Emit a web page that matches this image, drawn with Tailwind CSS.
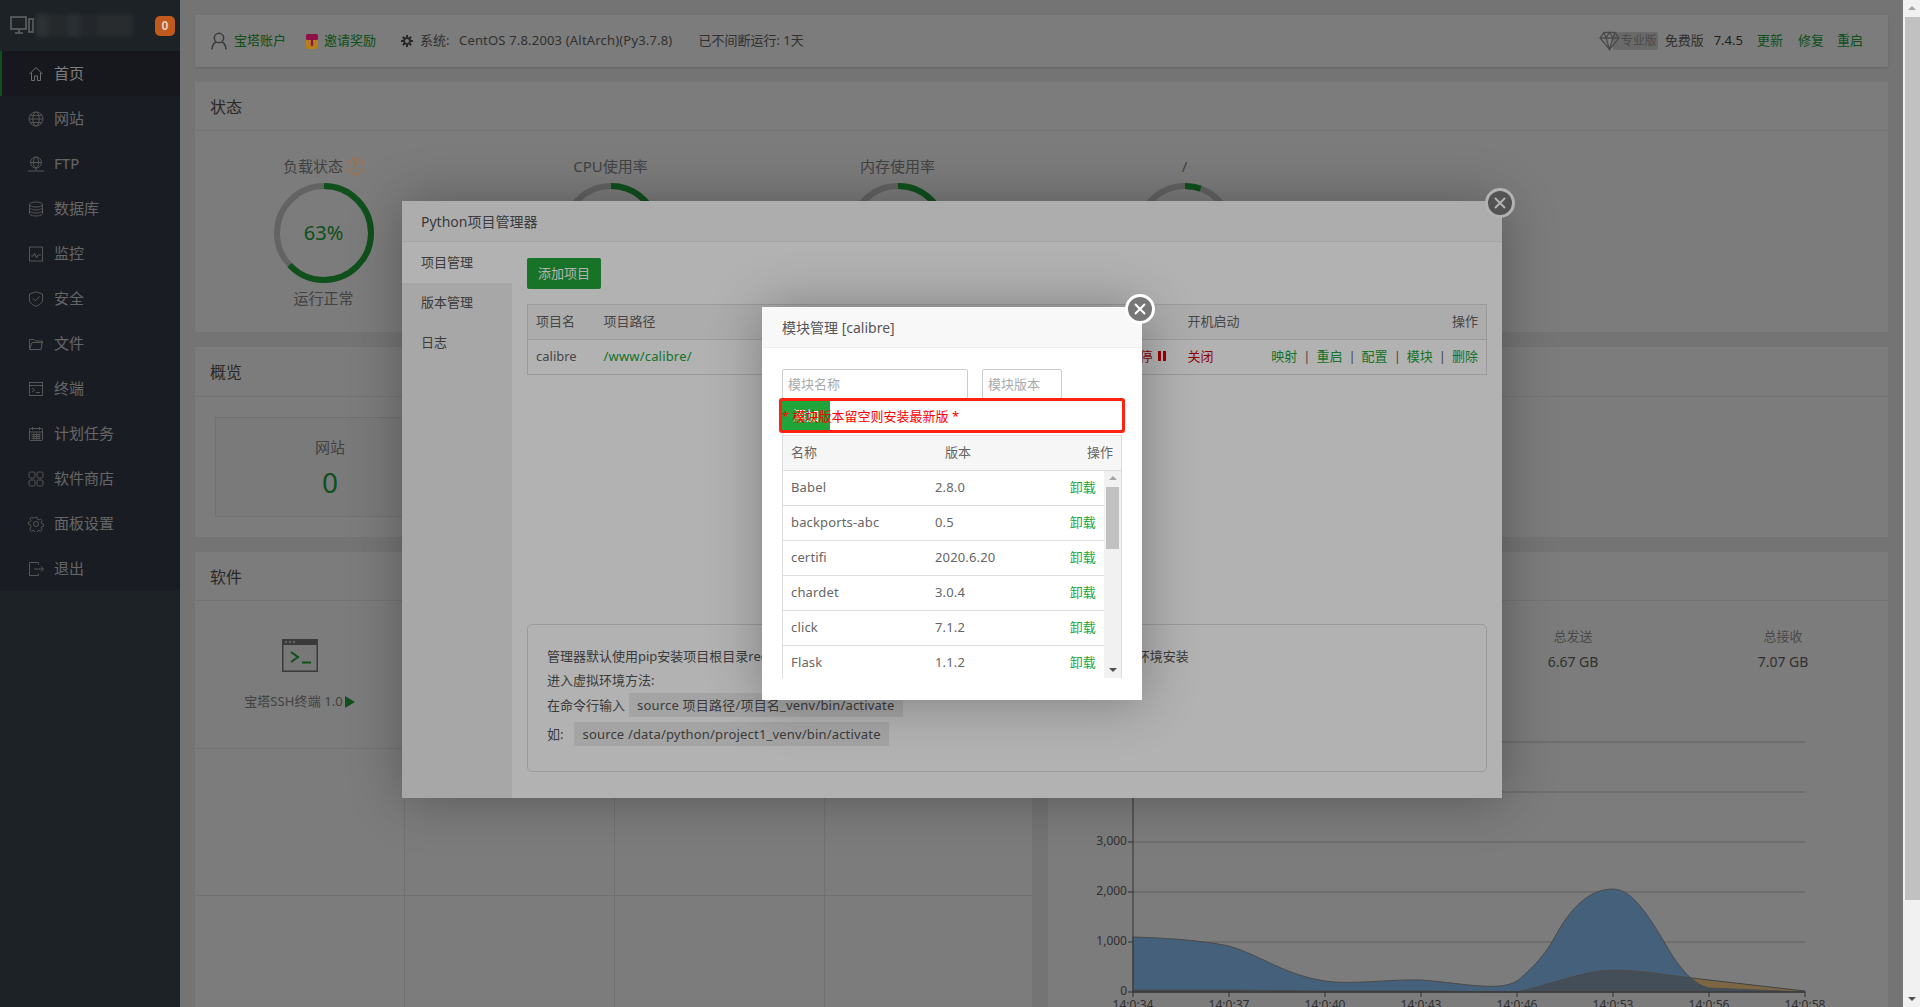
<!DOCTYPE html>
<html lang="zh-CN">
<head>
    <meta charset="UTF-8">
    <title>宝塔Linux面板</title>
    <script src="https://cdn.jsdelivr.net/npm/@tailwindcss/browser@4"></script>
</head>
<body class="bg-[#f0f0f0] overflow-hidden font-['Noto_Sans','Noto_Sans_CJK_SC',sans-serif] text-[13px] text-[#666]">
<div class="flex w-[1920px] h-[1007px] overflow-hidden">

    <!-- page under the two dialogs -->
    <div class="relative flex w-[1903px] h-[1007px] overflow-hidden">

        <!-- sidebar -->
        <aside class="w-[180px] shrink-0 bg-[#3c474f] text-[15px] text-[#d0d0d0]">
            <div class="flex items-center h-[51px] pl-[10px]">
                <svg class="w-[24px] h-[20px] shrink-0" viewBox="0 0 24 20" fill="none" stroke="#c8c8c8" stroke-width="1.6"><rect x="1" y="1" width="15" height="12"/><path d="M5 17h8M9 13v4"/><rect x="19" y="3" width="4" height="13"/></svg>
                <div class="flex h-[23px] w-[97px] ml-[2px] blur-[2px]">
                    <span class="w-[12px] bg-[#5d676d]"></span><span class="w-[20px] bg-[#4d565c]"></span><span class="w-[12px] bg-[#58626a]"></span><span class="w-[18px] bg-[#49525a]"></span><span class="w-[35px] bg-[#535c62]"></span>
                </div>
                <span class="relative z-[14] flex items-center justify-center w-[20px] h-[20px] ml-[22px] rounded-[5px] bg-[#c2591f] text-[#e0cdbd] text-[12px] font-bold">0</span>
            </div>
            <nav class="bg-[#363c47]">
                <a class="flex items-center h-[45px] pl-[26px] bg-[#2f333f] border-l-[2px] border-[#20a53a] text-white">
                    <svg class="w-[16px] h-[16px] mr-[10px] shrink-0" viewBox="0 0 16 16" fill="none" stroke="#e0e0e0"><path d="M1.5 8 8 1.5 14.5 8M3.5 6.5V14.5H6.5V10H9.5V14.5H12.5V6.5"/></svg>首页
                </a>
                <a class="flex items-center h-[45px] pl-[28px]">
                    <svg class="w-[16px] h-[16px] mr-[10px] shrink-0" viewBox="0 0 16 16" fill="none" stroke="#b0b0b0"><circle cx="8" cy="8" r="7"/><ellipse cx="8" cy="8" rx="3.2" ry="7"/><path d="M1 8h14M2 4.5h12M2 11.5h12"/></svg>网站
                </a>
                <a class="flex items-center h-[45px] pl-[28px]">
                    <svg class="w-[16px] h-[16px] mr-[10px] shrink-0" viewBox="0 0 16 16" fill="none" stroke="#b0b0b0"><circle cx="8" cy="6.5" r="5.5"/><ellipse cx="8" cy="6.5" rx="2.5" ry="5.5"/><path d="M2.5 6.5h11M8 12v2M0 15h16"/></svg>FTP
                </a>
                <a class="flex items-center h-[45px] pl-[28px]">
                    <svg class="w-[16px] h-[16px] mr-[10px] shrink-0" viewBox="0 0 16 16" fill="none" stroke="#b0b0b0"><ellipse cx="8" cy="3.5" rx="6.5" ry="2.5"/><path d="M1.5 3.5v9c0 1.4 2.9 2.5 6.5 2.5s6.500-1.100 6.500-2.500v-9M1.500 6.500c0 1.400 2.900 2.500 6.500 2.500s6.500-1.100 6.500-2.500M1.500 9.500c0 1.400 2.900 2.500 6.500 2.500s6.500-1.100 6.500-2.500"/></svg>数据库
                </a>
                <a class="flex items-center h-[45px] pl-[28px]">
                    <svg class="w-[16px] h-[16px] mr-[10px] shrink-0" viewBox="0 0 16 16" fill="none" stroke="#b0b0b0"><rect x="1.500" y="1" width="13" height="14"/><path d="M3 10h2.500l1-3 2 5 1.500-3H13"/></svg>监控
                </a>
                <a class="flex items-center h-[45px] pl-[28px]">
                    <svg class="w-[16px] h-[16px] mr-[10px] shrink-0" viewBox="0 0 16 16" fill="none" stroke="#b0b0b0"><path d="M8 .8 14.500 3v6c0 3-3 5-6.500 6.300C4.500 14 1.500 12 1.500 9V3z"/><path d="m5 7.500 2.300 2.300L11.500 5.500"/></svg>安全
                </a>
                <a class="flex items-center h-[45px] pl-[28px]">
                    <svg class="w-[16px] h-[16px] mr-[10px] shrink-0" viewBox="0 0 16 16" fill="none" stroke="#b0b0b0"><path d="M1.500 13.500v-10h4.500l1.500 1.500h7l-1.500 8.500z"/><path d="M14.500 6.500H4l-2.500 7"/></svg>文件
                </a>
                <a class="flex items-center h-[45px] pl-[28px]">
                    <svg class="w-[16px] h-[16px] mr-[10px] shrink-0" viewBox="0 0 16 16" fill="none" stroke="#b0b0b0"><rect x="1.500" y="1.500" width="13" height="13"/><path d="M1.500 4.500h13M4 7l2.500 2L4 11M8 11.500h4"/></svg>终端
                </a>
                <a class="flex items-center h-[45px] pl-[28px]">
                    <svg class="w-[16px] h-[16px] mr-[10px] shrink-0" viewBox="0 0 16 16" fill="none" stroke="#b0b0b0"><rect x="1.500" y="2.500" width="13" height="12" rx="1"/><path d="M1.500 6h13M4.500 1v3M11.500 1v3M3.500 8.500h9M3.500 10.500h9M3.500 12.500h9M6 7.500v6M8.500 7.500v6M11 7.500v6"/></svg>计划任务
                </a>
                <a class="flex items-center h-[45px] pl-[28px]">
                    <svg class="w-[16px] h-[16px] mr-[10px] shrink-0" viewBox="0 0 16 16" fill="none" stroke="#b0b0b0"><rect x="1" y="1" width="6" height="6" rx="1.500"/><rect x="9" y="1" width="6" height="6" rx="1.500"/><rect x="1" y="9" width="6" height="6" rx="1.500"/><rect x="9" y="9" width="6" height="6" rx="1.500"/></svg>软件商店
                </a>
                <a class="flex items-center h-[45px] pl-[28px]">
                    <svg class="w-[16px] h-[16px] mr-[10px] shrink-0" viewBox="0 0 16 16" fill="none" stroke="#b0b0b0"><circle cx="8" cy="8" r="2.500"/><path d="M6.800 1h2.400l.4 2 1.500.7 1.800-1 1.600 1.700-1.100 1.700.6 1.500 2 .5v2.400l-2 .4-.6 1.500 1.100 1.700-1.600 1.700-1.800-1-1.500.6-.4 2H6.800l-.4-2-1.500-.6-1.800 1-1.600-1.700L2.600 10.400 2 8.900 0 8.400V6l2-.5.600-1.500-1.100-1.700L3.100 .7l1.800 1 1.500-.7z" transform="translate(.5 .5) scale(.94)"/></svg>面板设置
                </a>
                <a class="flex items-center h-[45px] pl-[28px]">
                    <svg class="w-[16px] h-[16px] mr-[10px] shrink-0" viewBox="0 0 16 16" fill="none" stroke="#b0b0b0"><path d="M10.500 3.500v-2h-9v13h9v-2M6 8h9.500M13 5.500 15.500 8 13 10.500"/></svg>退出
                </a>
            </nav>
        </aside>

        <!-- main column -->
        <main class="w-[1723px] pt-[15px] px-[15px]">
            <div class="flex items-center h-[52px] px-[16px] bg-white shadow-sm">
                <svg class="w-[16px] h-[18px] mr-[7px]" viewBox="0 0 16 18" fill="none" stroke="#777" stroke-width="1.500"><circle cx="8" cy="6" r="4.700"/><path d="M1 17.500c0-4.500 2.500-7 4-7.500M15 17.500c0-4.500-2.500-7-4-7.500"/></svg>
                <a class="text-[#20a53a] w-[52px]">宝塔账户</a>
                <svg class="relative z-[14] w-[12px] h-[15px] ml-[20px] mr-[6px]" viewBox="0 0 12 15"><rect y="2" width="12" height="13" rx="1.500" fill="#b87f1c"/><rect width="12" height="6" rx="1.500" fill="#8e1048"/><path d="M5 6h2l.3 5-1.300 1.500L4.700 11z" fill="#8e1048"/></svg>
                <a class="text-[#20a53a] w-[52px]">邀请奖励</a>
                <svg class="w-[12px] h-[12px] ml-[25px] mr-[7px]" viewBox="0 0 12 12" fill="none" stroke="#555" stroke-width="2"><circle cx="6" cy="6" r="3"/><path d="M6 0v2M6 10v2M0 6h2M10 6h2M1.800 1.800l1.400 1.400M8.800 8.800l1.400 1.400M1.800 10.200l1.400-1.400M8.800 3.200l1.400-1.400"/></svg>
                <span class="w-[39px]">系统:</span>
                <span class="tracking-[0.18px]">CentOS 7.8.2003 (AltArch)(Py3.7.8)</span>
                <span class="ml-[26px]">已不间断运行: 1天</span>
                <div class="flex items-center ml-auto mr-[9px]">
                    <svg class="relative z-[1] w-[21px] h-[20px]" viewBox="0 0 21 20" fill="none" stroke="#999" stroke-width="1.300"><path d="M5 1.500h11l4 5.500-9.500 11.500L1 7zM1 7h19M7 7l3.500 11.500L14 7M5 1.500 7 7l3.500-5.500L14 7l2-5.500"/></svg>
                    <span class="flex items-center h-[18px] -ml-[7px] pl-[8px] pr-[1px] rounded-[2px] bg-[#d8d8d8] text-[#999] text-[12px]">专业版</span>
                    <span class="ml-[7px]">免费版</span>
                    <span class="ml-[10px] text-[#444]">7.4.5</span>
                    <a class="ml-[14px] text-[#20a53a]">更新</a>
                    <a class="ml-[15px] text-[#20a53a]">修复</a>
                    <a class="ml-[13px] text-[#20a53a]">重启</a>
                </div>
            </div>

            <!-- status -->
            <section class="h-[250px] mt-[15px] bg-white">
                <h3 class="flex items-center h-[49px] pt-[2px] px-[15px] border-b border-[#eee] text-[16px] font-normal text-[#555]">状态</h3>
                <div class="flex -ml-[15px] pt-[20px] text-center">
                    <div class="w-[287px] shrink-0">
                        <div class="flex items-center justify-center h-[30px] text-[15px] text-[#888]">负载状态<span class="relative z-[14] flex items-center justify-center w-[17px] h-[17px] ml-[4px] rounded-full border-[1.5px] border-[#b8692a] text-[#b8692a] text-[13px]">?</span></div>
                        <div class="relative w-[100px] h-[100px] mx-auto mt-[2px]">
                            <svg class="w-[100px] h-[100px] -rotate-90" viewBox="0 0 100 100" fill="none" stroke-width="6"><circle cx="50" cy="50" r="47" stroke="#ccc"/><circle cx="50" cy="50" r="47" stroke="#20a53a" stroke-dasharray="186 296"/></svg>
                            <span class="absolute inset-0 flex items-center justify-center text-[20px] text-[#20a53a]">63%</span>
                        </div>
                        <div class="mt-[4px] text-[15px] text-[#888]">运行正常</div>
                    </div>
                    <div class="w-[287px] shrink-0">
                        <div class="flex items-center justify-center h-[30px] text-[15px] text-[#888]">CPU使用率</div>
                        <svg class="w-[100px] h-[100px] mx-auto mt-[2px] -rotate-90" viewBox="0 0 100 100" fill="none" stroke-width="6"><circle cx="50" cy="50" r="47" stroke="#ccc"/><circle cx="50" cy="50" r="47" stroke="#20a53a" stroke-dasharray="60 296"/></svg>
                    </div>
                    <div class="w-[287px] shrink-0">
                        <div class="flex items-center justify-center h-[30px] text-[15px] text-[#888]">内存使用率</div>
                        <svg class="w-[100px] h-[100px] mx-auto mt-[2px] -rotate-90" viewBox="0 0 100 100" fill="none" stroke-width="6"><circle cx="50" cy="50" r="47" stroke="#ccc"/><circle cx="50" cy="50" r="47" stroke="#20a53a" stroke-dasharray="70 296"/></svg>
                    </div>
                    <div class="w-[287px] shrink-0">
                        <div class="flex items-center justify-center h-[30px] text-[15px] text-[#888]">/</div>
                        <svg class="w-[100px] h-[100px] mx-auto mt-[2px] -rotate-90" viewBox="0 0 100 100" fill="none" stroke-width="6"><circle cx="50" cy="50" r="47" stroke="#ccc"/><circle cx="50" cy="50" r="47" stroke="#20a53a" stroke-dasharray="16 296"/></svg>
                    </div>
                </div>
            </section>

            <!-- overview -->
            <section class="h-[190px] mt-[15px] bg-white">
                <h3 class="flex items-center h-[50px] px-[15px] border-b border-[#eee] text-[16px] font-normal text-[#555]">概览</h3>
                <div class="flex gap-[20px] pt-[20px] px-[20px]">
                    <div class="flex flex-col items-center w-[230px] h-[100px] pt-[18px] border border-[#e8e8e8] bg-[#fbfbfb]">
                        <span class="text-[15px] text-[#888]">网站</span>
                        <span class="mt-[5px] text-[28px] leading-[36px] text-[#20a53a]">0</span>
                    </div>
                </div>
            </section>

            <!-- software and traffic -->
            <div class="flex gap-[16px] mt-[15px]">
                <section class="w-[837px] shrink-0 h-[500px] bg-white">
                    <h3 class="flex items-center h-[49px] pt-[2px] px-[15px] border-b border-[#eee] text-[16px] font-normal text-[#555]">软件</h3>
                    <div class="grid grid-cols-[210px_210px_210px_207px] grid-rows-[148px_147px_147px]">
                        <div class="flex flex-col items-center pt-[38px] border-r border-b border-[#eaeaee]">
                            <svg class="w-[36px] h-[33px]" viewBox="0 0 36 33"><rect x=".75" y=".75" width="34.500" height="31.500" fill="#f6f6f6" stroke="#777" stroke-width="1.500"/><rect width="36" height="6" fill="#777"/><circle cx="4" cy="3" r="1.200" fill="#ccc"/><circle cx="8" cy="3" r="1.200" fill="#ccc"/><circle cx="12" cy="3" r="1.200" fill="#ccc"/><path d="m9 13 7 5-7 5M20 23.500h9" fill="none" stroke="#20a53a" stroke-width="2"/></svg>
                            <div class="flex items-center mt-[20px] text-[#888] tracking-[0.1px]">宝塔SSH终端 1.0<span class="w-0 h-0 ml-[2px] border-y-[6px] border-y-transparent border-l-[10px] border-l-[#20a53a]"></span></div>
                        </div>
                        <div class="border-r border-b border-[#eaeaee]"></div>
                        <div class="border-r border-b border-[#eaeaee]"></div>
                        <div class="border-b border-[#eaeaee]"></div>
                        <div class="border-r border-b border-[#eaeaee]"></div>
                        <div class="border-r border-b border-[#eaeaee]"></div>
                        <div class="border-r border-b border-[#eaeaee]"></div>
                        <div class="border-b border-[#eaeaee]"></div>
                        <div class="border-r border-[#eaeaee]"></div>
                        <div class="border-r border-[#eaeaee]"></div>
                        <div class="border-r border-[#eaeaee]"></div>
                        <div></div>
                    </div>
                </section>

                <section class="flex-1 h-[500px] bg-white">
                    <h3 class="flex items-center h-[49px] px-[15px] border-b border-[#eee] text-[16px] font-normal text-[#555]">流量</h3>
                    <div class="grid grid-cols-4 h-[106px] pt-[26px] text-center">
                        <div class="text-[#999]">上行</div>
                        <div class="text-[#999]">下行</div>
                        <div><div class="text-[#999]">总发送</div><div class="mt-[4px] text-[14px] text-[#666]">6.67 GB</div></div>
                        <div><div class="text-[#999]">总接收</div><div class="mt-[4px] text-[14px] text-[#666]">7.07 GB</div></div>
                    </div>
                    <svg class="w-[840px] h-[300px]" viewBox="1048 707 840 300" font-size="12" fill="#666" text-anchor="end">
                        <defs><clipPath id="blueArea"><path d="M1133 992V937C1165 938 1200 940 1229 946C1262 956 1285 975 1325 981C1350 985 1390 979 1421 980C1450 982 1480 988 1500 986C1510 985 1517 982 1523 976C1535 965 1545 955 1556 935C1575 900 1595 889 1613 889C1632 889 1648 915 1666 945C1680 970 1695 985 1709 988L1805 992Z"/></clipPath></defs>
                        <path d="M1133 742H1805M1133 792H1805M1133 842H1805M1133 892H1805M1133 942H1805" stroke="#c6c6c6" fill="none"/>
                        <path d="M1133 992V990L1229 990 1325 991 1421 991 1517 992C1550 985 1585 970 1613 970C1640 970 1680 977 1709 980L1805 991V992Z" fill="#ffd28a" stroke="#888"/>
                        <path d="M1133 992V937C1165 938 1200 940 1229 946C1262 956 1285 975 1325 981C1350 985 1390 979 1421 980C1450 982 1480 988 1500 986C1510 985 1517 982 1523 976C1535 965 1545 955 1556 935C1575 900 1595 889 1613 889C1632 889 1648 915 1666 945C1680 970 1695 985 1709 988L1805 992Z" fill="#8fc6fb" stroke="#999"/>
                        <path clip-path="url(#blueArea)" d="M1133 992V990L1229 990 1325 991 1421 991 1517 992C1550 985 1585 970 1613 970C1640 970 1680 977 1709 980L1805 991V992Z" fill="#8da1b8" stroke="#999"/>
                        <path d="M1133 742V992H1805M1128 792H1133M1128 842H1133M1128 892H1133M1128 942H1133M1128 992H1133M1133 992V997M1229 992V997M1325 992V997M1421 992V997M1517 992V997M1613 992V997M1709 992V997M1805 992V997" stroke="#666" fill="none"/>
                        <text x="1127" y="795">4,000</text><text x="1127" y="845">3,000</text><text x="1127" y="895">2,000</text><text x="1127" y="945">1,000</text><text x="1127" y="995">0</text>
                        <g text-anchor="middle"><text x="1133" y="1009">14:0:34</text><text x="1229" y="1009">14:0:37</text><text x="1325" y="1009">14:0:40</text><text x="1421" y="1009">14:0:43</text><text x="1517" y="1009">14:0:46</text><text x="1613" y="1009">14:0:53</text><text x="1709" y="1009">14:0:56</text><text x="1805" y="1009">14:0:58</text></g>
                    </svg>
                </section>
            </div>
        </main>

        <!-- first shade and project dialog -->
        <div class="absolute inset-0 z-[10] bg-black/30"></div>
        <div class="absolute z-[11] left-[402px] top-[201px] flex flex-col w-[1100px] h-[597px] bg-white shadow-[1px_1px_50px_rgba(0,0,0,0.3)]">
            <div class="flex items-center h-[41px] px-[19px] bg-[#f8f8f8] border-b border-[#eee] text-[14px] text-[#555]">Python项目管理器</div>
            <div class="flex flex-1">
                <div class="w-[110px] bg-[#f0f0f0] text-[#555]">
                    <div class="flex items-center h-[41px] pl-[19px] bg-white">项目管理</div>
                    <div class="flex items-center h-[40px] pl-[19px]">版本管理</div>
                    <div class="flex items-center h-[40px] pl-[19px]">日志</div>
                </div>
                <div class="flex flex-col flex-1 pt-[16px] px-[15px]">
                    <button class="w-[74px] h-[31px] rounded-[2px] bg-[#20a53a] text-white">添加项目</button>
                    <table class="w-[960px] mt-[15px] table-fixed border border-[#ddd]">
                        <thead>
                            <tr class="h-[35px] bg-[#f6f6f6] border-b border-[#ddd] text-left">
                                <th class="w-[68px] pl-[8px] font-normal">项目名</th>
                                <th class="w-[510px] pl-[8px] font-normal">项目路径</th>
                                <th class="w-[74px] pl-[8px] font-normal">状态</th>
                                <th class="w-[80px] pl-[8px] font-normal">开机启动</th>
                                <th class="pr-[8px] text-right font-normal">操作</th>
                            </tr>
                        </thead>
                        <tbody>
                            <tr class="h-[35px]">
                                <td class="pl-[8px]">calibre</td>
                                <td class="pl-[8px] text-[#20a53a] tracking-[0.18px]">/www/calibre/</td>
                                <td class="pl-[8px] whitespace-nowrap text-[#c00]">已暂停 <span class="inline-flex gap-[2px] ml-[2px]"><i class="w-[3px] h-[10px] bg-[#d00]"></i><i class="w-[3px] h-[10px] bg-[#d00]"></i></span></td>
                                <td class="pl-[8px] text-[#c00]">关闭</td>
                                <td class="pr-[8px] text-right text-[#20a53a]">映射<span class="mx-[6px] text-[#666]">|</span>重启<span class="mx-[6px] text-[#666]">|</span>配置<span class="mx-[6px] text-[#666]">|</span>模块<span class="mx-[6px] text-[#666]">|</span>删除</td>
                            </tr>
                        </tbody>
                    </table>
                    <div class="mt-[249px] h-[148px] pt-[19px] pl-[19px] border border-[#ddd] rounded-[5px] whitespace-nowrap leading-[24px] text-[#555]">
                        <p>管理器默认使用pip安装项目根目录requirements.txt文件中的依赖包，如需安装其它模块时请进入虚拟环境安装</p>
                        <p>进入虚拟环境方法:</p>
                        <p class="mt-[1px]">在命令行输入<code class="inline-block ml-[4px] px-[8px] bg-[#ebebeb] tracking-[0.2px] font-['Noto_Sans','Noto_Sans_CJK_SC',sans-serif]">source 项目路径/项目名_venv/bin/activate</code></p>
                        <p class="mt-[5px]">如:<code class="inline-block ml-[11px] px-[8px] bg-[#ebebeb] tracking-[0.18px] font-['Noto_Sans','Noto_Sans_CJK_SC',sans-serif]">source /data/python/project1_venv/bin/activate</code></p>
                    </div>
                </div>
            </div>
            <button class="absolute -right-[13px] -top-[13px] flex items-center justify-center w-[30px] h-[30px] rounded-full border-[3px] border-white bg-[#777]">
                <svg class="w-[12px] h-[12px]" viewBox="0 0 12 12" stroke="#fff" stroke-width="2"><path d="m1 1 10 10M11 1 1 11"/></svg>
            </button>
        </div>

        <!-- second shade and module dialog -->
        <div class="absolute inset-0 z-[12] bg-black/30"></div>
        <div class="absolute z-[13] left-[762px] top-[307px] w-[380px] h-[393px] bg-white shadow-[1px_1px_50px_rgba(0,0,0,0.3)]">
            <div class="flex items-center h-[41px] px-[20px] bg-[#f8f8f8] border-b border-[#eee] text-[14px] text-[#555]">模块管理 [calibre]</div>
            <div class="flex gap-[14px] pt-[21px] px-[20px]">
                <input class="w-[186px] h-[30px] px-[5px] border border-[#ccc] rounded-[2px] outline-none placeholder:text-[#aaa]" placeholder="模块名称">
                <input class="w-[80px] h-[30px] px-[5px] border border-[#ccc] rounded-[2px] outline-none placeholder:text-[#aaa]" placeholder="模块版本">
            </div>
            <div class="relative w-[346px] h-[35px] -mt-[1px] ml-[17px] border-[3px] border-[#ff2112] rounded-[3px] bg-white">
                <button class="w-[48px] h-[29px] bg-[#20a53a] text-white">添加</button>
                <span class="absolute left-0 top-[1px] h-[29px] leading-[29px] whitespace-nowrap text-[#ff0000]">* 模块版本留空则安装最新版 *</span>
            </div>
            <div class="w-[340px] ml-[20px] mt-[2px] border-x border-[#ddd]">
                <div class="relative h-[36px] bg-[#f6f6f6] border-y border-[#ddd]">
                    <span class="absolute left-[8px] top-[7px]">名称</span>
                    <span class="absolute left-[162px] top-[7px]">版本</span>
                    <span class="absolute right-[8px] top-[7px]">操作</span>
                </div>
                <div class="flex h-[207px] overflow-hidden">
                    <div class="flex-1 tracking-[0.15px]">
                        <div class="grid grid-cols-[144px_1fr_auto] items-center h-[35px] px-[8px] border-b border-[#ddd]"><span>Babel</span><span>2.8.0</span><a class="text-[#20a53a]">卸载</a></div>
                        <div class="grid grid-cols-[144px_1fr_auto] items-center h-[35px] px-[8px] border-b border-[#ddd]"><span>backports-abc</span><span>0.5</span><a class="text-[#20a53a]">卸载</a></div>
                        <div class="grid grid-cols-[144px_1fr_auto] items-center h-[35px] px-[8px] border-b border-[#ddd]"><span>certifi</span><span>2020.6.20</span><a class="text-[#20a53a]">卸载</a></div>
                        <div class="grid grid-cols-[144px_1fr_auto] items-center h-[35px] px-[8px] border-b border-[#ddd]"><span>chardet</span><span>3.0.4</span><a class="text-[#20a53a]">卸载</a></div>
                        <div class="grid grid-cols-[144px_1fr_auto] items-center h-[35px] px-[8px] border-b border-[#ddd]"><span>click</span><span>7.1.2</span><a class="text-[#20a53a]">卸载</a></div>
                        <div class="grid grid-cols-[144px_1fr_auto] items-center h-[35px] px-[8px] border-b border-[#ddd]"><span>Flask</span><span>1.1.2</span><a class="text-[#20a53a]">卸载</a></div>
                    </div>
                    <div class="relative w-[17px] bg-[#f1f1f1]">
                        <span class="absolute left-[5px] top-[5px] w-0 h-0 border-x-[4px] border-x-transparent border-b-[4px] border-b-[#a3a3a3]"></span>
                        <span class="absolute left-[2px] top-[16px] w-[13px] h-[62px] bg-[#c1c1c1]"></span>
                        <span class="absolute left-[5px] bottom-[6px] w-0 h-0 border-x-[4px] border-x-transparent border-t-[4px] border-t-[#505050]"></span>
                    </div>
                </div>
            </div>
            <button class="absolute -right-[13px] -top-[13px] flex items-center justify-center w-[30px] h-[30px] rounded-full border-[3px] border-white bg-[#777]">
                <svg class="w-[12px] h-[12px]" viewBox="0 0 12 12" stroke="#fff" stroke-width="2"><path d="m1 1 10 10M11 1 1 11"/></svg>
            </button>
        </div>
    </div>

    <!-- page scrollbar, not covered by the shades -->
    <div class="relative w-[17px] h-[1007px] bg-[#f1f1f1]">
        <span class="absolute left-[5px] top-[6px] w-0 h-0 border-x-[4px] border-x-transparent border-b-[4px] border-b-[#a3a3a3]"></span>
        <span class="absolute left-[2px] top-[17px] w-[15px] h-[883px] bg-[#c1c1c1]"></span>
        <span class="absolute left-[5px] bottom-[6px] w-0 h-0 border-x-[4px] border-x-transparent border-t-[4px] border-t-[#505050]"></span>
    </div>
</div>
</body>
</html>
